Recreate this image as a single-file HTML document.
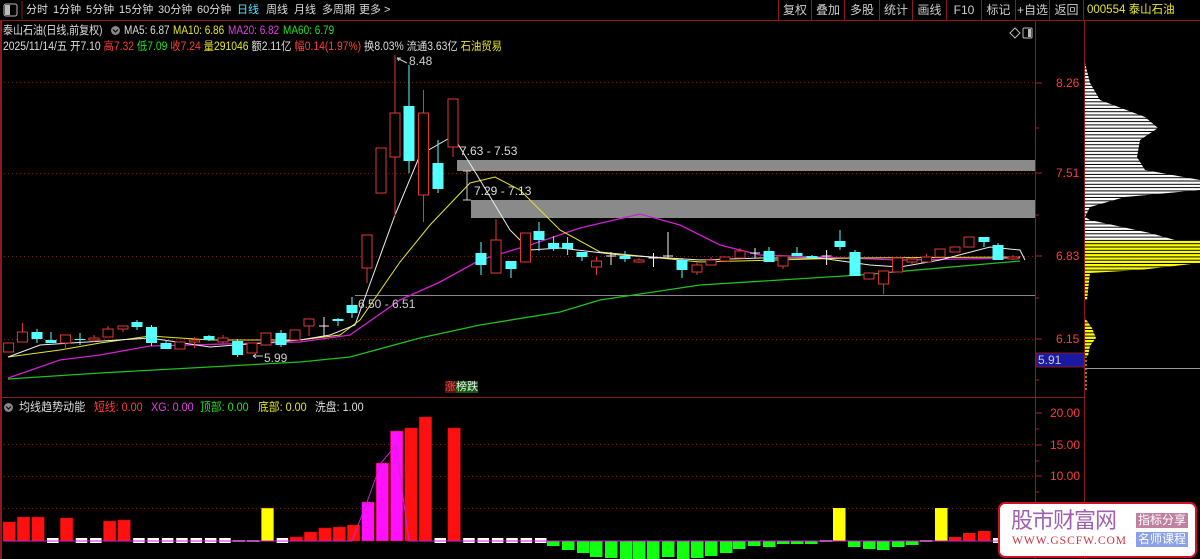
<!DOCTYPE html>
<html><head><meta charset="utf-8"><style>
*{margin:0;padding:0;box-sizing:border-box}
body{width:1200px;height:559px;background:#000;overflow:hidden;position:relative;font-family:"Liberation Sans","Noto Sans CJK SC",sans-serif;font-size:12px;color:#ddd}
.a{position:absolute;white-space:nowrap;line-height:14px}
.m{top:3px;color:#ddd;font-size:11px}
.sx{transform-origin:0 0}
.btn{position:absolute;top:0;height:20px;line-height:20px;text-align:center;color:#ccc;font-size:12px;border-left:1px solid #8b1a1a}
.r{color:#ff3c3c}.g{color:#22e022}.y{color:#e6e62a}.p{color:#e040e0}.w{color:#ddd}
</style></head><body>
<svg width="1200" height="559" style="position:absolute;left:0;top:0">
<defs><pattern id="st" width="10" height="3.3" patternUnits="userSpaceOnUse"><rect y="2.3" width="10" height="1" fill="#000"/></pattern></defs>
<line x1="0" y1="20.5" x2="1200" y2="20.5" stroke="#8b1a1a"/>
<line x1="1" y1="20" x2="1" y2="559" stroke="#8b1a1a" stroke-width="2"/>
<line x1="1035.5" y1="20" x2="1035.5" y2="559" stroke="#8b1a1a"/>
<line x1="1084.5" y1="20" x2="1084.5" y2="559" stroke="#8b1a1a"/>
<line x1="0" y1="397.5" x2="1085" y2="397.5" stroke="#8b1a1a"/>
<line x1="22" y1="1" x2="22" y2="19" stroke="#8b1a1a"/>
<g stroke="#7a1a1a" stroke-dasharray="1,3">
<line x1="4" y1="82.5" x2="1035" y2="82.5"/><line x1="4" y1="173.5" x2="1035" y2="173.5"/>
<line x1="4" y1="256.5" x2="1035" y2="256.5"/><line x1="4" y1="339.5" x2="1035" y2="339.5"/>
<line x1="4" y1="444.5" x2="1035" y2="444.5"/><line x1="4" y1="476.5" x2="1035" y2="476.5"/>
<line x1="4" y1="508.5" x2="1035" y2="508.5"/>
</g>
<g stroke="#b02020">
<line x1="1036" y1="83" x2="1042" y2="83"/><line x1="1036" y1="173" x2="1042" y2="173"/><line x1="1036" y1="256" x2="1042" y2="256"/><line x1="1036" y1="339" x2="1042" y2="339"/>
<line x1="1036" y1="128" x2="1039" y2="128"/><line x1="1036" y1="215" x2="1039" y2="215"/><line x1="1036" y1="298" x2="1039" y2="298"/><line x1="1036" y1="380" x2="1039" y2="380"/>
<line x1="1036" y1="413" x2="1042" y2="413"/><line x1="1036" y1="445" x2="1042" y2="445"/><line x1="1036" y1="476" x2="1042" y2="476"/><line x1="1036" y1="508" x2="1042" y2="508"/>
<line x1="1036" y1="429" x2="1039" y2="429"/><line x1="1036" y1="461" x2="1039" y2="461"/><line x1="1036" y1="492" x2="1039" y2="492"/>
</g>
<rect x="457" y="160" width="578" height="11" fill="#8a8a8a"/>
<rect x="471" y="200" width="564" height="18" fill="#8a8a8a"/>
<line x1="355" y1="295.5" x2="1035" y2="295.5" stroke="#888"/>
<path d="M467 171V200M463 171H471M463 200H471" stroke="#ccc" fill="none"/>
<polyline fill="none" stroke="#20c020" stroke-width="1.3" points="8,379 100,373 300,362 350,357 420,338 480,325 560,312 600,300 700,285 860,275 1020,261"/>
<polyline fill="none" stroke="#d020d0" stroke-width="1.3" points="8,378 60,360 100,355 150,346 300,342 350,335 400,300 440,282 480,260 530,245 580,228 640,214 680,225 720,245 760,255 900,260 1020,258"/>
<polyline fill="none" stroke="#e6e62a" stroke-width="1" points="8,357 60,350 100,343 150,336 210,340 300,340 340,335 360,320 400,262 430,225 470,183 495,177 520,190 560,230 600,252 700,262 850,258 1020,257"/>
<polyline fill="none" stroke="#eee" stroke-width="1" points="8,357 40,345 150,338 210,347 300,340 330,335 355,325 395,215 420,155 453,136 480,180 510,230 530,250 560,248 620,255 700,260 760,258 820,258 870,265 900,267 940,260 990,247 1020,250 1025,260"/>
<g id="cand"></g>
<g id="bars"></g>
<polyline fill="none" stroke="#d020d0" stroke-width="1" points="4,541 352,541 367,502 381,463 396,445 409,541 1030,541"/>
<g>
<polygon fill="#fff" points="1085,63 1090,83 1100,100 1145,117 1158,128 1140,140 1137,157 1145,170 1200,180 1200,190 1125,197 1090,207 1085,217 1090,220 1150,233 1175,240 1085,240"/>
<polygon fill="#ffff00" points="1085,240 1200,240 1200,263 1140,270 1090,273 1087,300 1085,300"/>
<polygon fill="#ffff00" points="1085,318 1092,328 1096,338 1090,346 1088,356 1085,356"/>
<line x1="1086" y1="356" x2="1086" y2="390" stroke="#ffff00" stroke-dasharray="2,2"/>
<rect x="1085" y="60" width="115" height="300" fill="url(#st)"/>
<line x1="1085" y1="368.5" x2="1200" y2="368.5" stroke="#999"/>
</g>
<rect x="1036" y="353" width="48" height="14" fill="#1a1aa0" stroke="#8b1a1a"/>
<rect x="4" y="4" width="13" height="12" rx="2" fill="none" stroke="#bbb"/><rect x="5" y="5" width="5" height="10" fill="#bbb"/>
<path d="M1015 28l5 5-5 5-5-5z" fill="none" stroke="#bbb"/>
<rect x="1023" y="28" width="9" height="10" rx="1" fill="none" stroke="#bbb"/><rect x="1028" y="29" width="3" height="8" fill="#bbb"/>
<circle cx="115.5" cy="30.5" r="4.5" fill="#888"/><path d="M113 29.5l2.5 2.5 2.5-2.5" stroke="#000" fill="none"/>
<circle cx="8.5" cy="407.5" r="4.5" fill="#888"/><path d="M6 406.5l2.5 2.5 2.5-2.5" stroke="#000" fill="none"/>
<path d="M397 58l10 5M397 58l4 0M397 58l2 3" stroke="#ccc" fill="none"/>
<path d="M253 356h10M253 356l3-2M253 356l3 2" stroke="#ccc" fill="none"/>
</svg>

<div class="a m" style="left:26px">分时</div>
<div class="a m" style="left:53px">1分钟</div>
<div class="a m" style="left:86px">5分钟</div>
<div class="a m" style="left:119px">15分钟</div>
<div class="a m" style="left:158px">30分钟</div>
<div class="a m" style="left:197px">60分钟</div>
<div class="a m" style="left:237px;color:#55e5ff">日线</div>
<div class="a m" style="left:266px">周线</div>
<div class="a m" style="left:294px">月线</div>
<div class="a m" style="left:322px">多周期</div>
<div class="a m" style="left:359px">更多 &gt;</div>

<div class="btn" style="left:778px;width:33px">复权</div>
<div class="btn" style="left:811px;width:33px">叠加</div>
<div class="btn" style="left:844px;width:35px">多股</div>
<div class="btn" style="left:879px;width:33px">统计</div>
<div class="btn" style="left:912px;width:34px">画线</div>
<div class="btn" style="left:946px;width:35px">F10</div>
<div class="btn" style="left:981px;width:34px">标记</div>
<div class="btn" style="left:1015px;width:34px">+自选</div>
<div class="btn" style="left:1049px;width:35px;border-right:1px solid #8b1a1a">返回</div>
<div class="a" style="left:1087px;top:3px;color:#e6e62a;font-size:11.5px">000554 泰山石油</div>

<div class="a sx" style="left:3px;top:24px;font-size:11.5px;transform:scaleX(.87)">泰山石油(日线,前复权)</div>
<div class="a sx" style="left:124px;top:24px;font-size:11.5px;transform:scaleX(.87)">MA5: 6.87</div>
<div class="a sx y" style="left:173px;top:24px;font-size:11.5px;transform:scaleX(.87)">MA10: 6.86</div>
<div class="a sx p" style="left:228px;top:24px;font-size:11.5px;transform:scaleX(.87)">MA20: 6.82</div>
<div class="a sx g" style="left:283px;top:24px;font-size:11.5px;transform:scaleX(.87)">MA60: 6.79</div>
<div class="a sx" style="left:3px;top:40px;font-size:11.5px;transform:scaleX(.9)">2025/11/14/五 开7.10 <span class="r">高7.32</span> <span class="g">低7.09</span> <span class="r">收7.24</span> <span class="y">量291046</span> 额2.11亿 <span class="r">幅0.14(1.97%)</span> 换8.03% 流通3.63亿 <span class="y">石油贸易</span></div>

<div class="a" style="left:409px;top:54px;color:#ccc">8.48</div>
<div class="a" style="left:460px;top:144px;color:#ddd">7.63 - 7.53</div>
<div class="a" style="left:474px;top:184px;color:#ddd">7.29 - 7.13</div>
<div class="a" style="left:358px;top:297px;color:#ccc">6.50 - 6.51</div>
<div class="a" style="left:264px;top:351px;color:#ccc">5.99</div>

<div class="a r" style="left:1056px;top:76px">8.26</div>
<div class="a r" style="left:1056px;top:166px">7.51</div>
<div class="a r" style="left:1056px;top:249px">6.83</div>
<div class="a r" style="left:1056px;top:332px">6.15</div>
<div class="a" style="left:1038px;top:353px;color:#ccc">5.91</div>

<div class="a" style="left:445px;top:381px;font-size:11px;line-height:12px"><span style="background:#5a1010;color:#f44">涨</span><span style="background:#105a10;color:#eee">榜跌</span></div>

<div class="a sx" style="left:19px;top:400px;font-size:12px;transform:scaleX(.92)">均线趋势动能</div>
<div class="a sx r" style="left:94px;top:400px;font-size:12px;transform:scaleX(.9)">短线: 0.00</div>
<div class="a sx p" style="left:151px;top:400px;font-size:12px;transform:scaleX(.9)">XG: 0.00</div>
<div class="a sx g" style="left:200px;top:400px;font-size:12px;transform:scaleX(.9)">顶部: 0.00</div>
<div class="a sx y" style="left:258px;top:400px;font-size:12px;transform:scaleX(.9)">底部: 0.00</div>
<div class="a sx w" style="left:315px;top:400px;font-size:12px;transform:scaleX(.9)">洗盘: 1.00</div>

<div class="a r" style="left:1050px;top:406px">20.00</div>
<div class="a r" style="left:1050px;top:438px">15.00</div>
<div class="a r" style="left:1050px;top:469px">10.00</div>

<div style="position:absolute;left:998px;top:502px;width:199px;height:56px;background:#fff;border:2px solid #d01020;border-radius:7px"></div>
<div class="a" style="left:1011px;top:509px;font-size:22px;line-height:24px;color:#a060b0;letter-spacing:-1px">股市财富网</div>
<div class="a" style="left:1012px;top:535px;font-size:11.5px;line-height:12px;color:#d03040;font-family:'Liberation Serif',serif;letter-spacing:1px">WWW.GSCFW.COM</div>
<div class="a" style="left:1136px;top:513px;width:52px;height:15px;background:#c080a0;color:#fff;font-size:12px;line-height:15px;text-align:center">指标分享</div>
<div class="a" style="left:1136px;top:532px;width:52px;height:15px;background:#8aa0e8;color:#fff;font-size:12px;line-height:15px;text-align:center">名师课程</div>

<script>
var C=[[8.6,343,352,343,352,'r'],[22.4,332,342,323,342,'r'],[37,332,339,329,343,'c'],[51,340,343,332,343,'c'],[65.4,335,343,335,350,'r'],[80,339,340,333,345,'c'],[94,338,340,335,342,'r'],[108,329,337,326,337,'r'],[123,326,329,326,332,'r'],[137,322,327,320,330,'c'],[151.5,327,343,325,346,'c'],[166,343,349,340,349,'c'],[180,342,349,342,349,'r'],[194.6,340,342,337,348,'r'],[209,336,340,335,341,'c'],[223,338,342,335,344,'r'],[237.6,341,355,339,357,'c'],[252,343,353,343,353,'r'],[266,333,345,333,345,'r'],[281,333,345,330,347,'c'],[295,330,340,330,340,'r'],[309,319,326,319,336,'r'],[324,326,327,317,337,'w'],[338,319,321,318,326,'c'],[352,305,313,297,318,'c'],[367,235,268,235,283,'r'],[381,148,193,148,193,'r'],[395,113,157,55,217,'r'],[409,106,161,65,173,'c'],[423.5,113,195,90,222,'r'],[438,163,189,140,193,'c'],[453,99,147,99,157,'r'],
[481,253,265,242,275,'c'],[496,240,273,219,273,'r'],[511,261,269,261,278,'c'],[525.5,233,262,233,262,'r'],[539,231,240,222,251,'c'],[553.6,243,249,236,251,'c'],[567.6,243,249,237,255,'c'],[582,252,257,252,261,'c'],[596.5,261,267,257,275,'r'],[611,256,257,252,265,'w'],[625,256,259,251,262,'c'],[639,260,262,258,263,'r'],[653.5,258,259,253,267,'w'],[668,256,258,232,258,'w'],[682,260,270,258,278,'c'],[697,265,272,262,275,'r'],[711,260,265,257,265,'r'],[725,257,261,257,261,'r'],[740,251,258,248,258,'r'],[755,253,254,248,258,'w'],[769,251,262,247,262,'c'],[783,256,266,256,269,'r'],[797,253,256,247,256,'c'],[812,256,258,255,259,'c'],[826.6,256,257,250,265,'w'],[840,241,247,230,250,'c'],[855,252,276,250,276,'c'],[869,273,279,273,279,'r'],[883.6,271,284,271,294,'r'],[897.6,258,272,258,272,'r'],[912,259,262,257,264,'r'],[926.5,257,262,254,262,'r'],[940,249,257,249,257,'r'],[955,247,252,247,252,'r'],[969,237,247,237,247,'r'],[984,237,242,237,247,'c'],[998,245,260,243,260,'c'],[1013,257,259,255,260,'r']];
var s='';
C.forEach(function(c){var x=c[0],t=c[1],b=c[2],col=c[5]=='r'?'#e03838':c[5]=='c'?'#55ffff':'#eee';
s+='<line x1="'+x+'" y1="'+c[3]+'" x2="'+x+'" y2="'+c[4]+'" stroke="'+col+'"/>';
if(c[5]=='r')s+='<rect x="'+(x-5)+'" y="'+t+'" width="10" height="'+Math.max(b-t,1)+'" fill="#000" stroke="'+col+'"/>';
else if(c[5]=='c')s+='<rect x="'+(x-5.5)+'" y="'+t+'" width="11" height="'+Math.max(b-t,1)+'" fill="'+col+'"/>';
else s+='<line x1="'+(x-5)+'" y1="'+t+'" x2="'+(x+5)+'" y2="'+t+'" stroke="'+col+'"/>';});
document.getElementById('cand').innerHTML=s;
var B=[['r',522],['r',517],['r',517],['w'],['r',518],['w'],['w'],['r',521],['r',520],['w'],['w'],['w'],['w'],['w'],['w'],['w'],['n'],['n'],['y',508],['w'],['r',537],['r',532],['r',528],['r',527],['r',525],['m',502],['m',463],['m',431],['r',428],['r',417],['w'],['r',428],['w'],['w'],['w'],['w'],['w'],['w']];
var G=[[547,546],[562,550],[577,553],[590,557],[605,558],[620,559],[633,559],[647,559],[662,557],[677,559],[691,558],[705,556],[720,553],[733,549],[748,546],[763,547],[777,544],[791,544],[805,544],[820,0],[833,-1],[848,547],[863,549],[877,550],[892,547],[906,545],[920,0],[935,-1],[949,-537],[963,-533],[978,-531],[993,-2]];
var h='',base=541;
B.forEach(function(b,i){var l=3+14.35*i,w=12.5;
if(b[0]=='w')h+='<rect x="'+(l+1)+'" y="538" width="'+(w-1)+'" height="5" fill="#fff"/>';
else if(b[0]=='n')h+='<line x1="'+l+'" y1="541" x2="'+(l+w)+'" y2="541" stroke="#888" stroke-width="2"/>';
else{var c=b[0]=='r'?'#ff1010':b[0]=='y'?'#ffff00':'#ff10ff';h+='<rect x="'+l+'" y="'+b[1]+'" width="'+w+'" height="'+(base-b[1])+'" fill="'+c+'" stroke="#b00" stroke-width="0.5"/>';}});
G.forEach(function(g){var l=g[0],w=12.5,v=g[1];
if(v==0)h+='<line x1="'+l+'" y1="541" x2="'+(l+w)+'" y2="541" stroke="#888" stroke-width="2"/>';
else if(v==-1)h+='<rect x="'+l+'" y="508" width="'+w+'" height="33" fill="#ffff00"/>';
else if(v==-2)h+='<rect x="'+l+'" y="538" width="'+w+'" height="5" fill="#fff"/>';
else if(v<0)h+='<rect x="'+l+'" y="'+(-v)+'" width="'+w+'" height="'+(base+v)+'" fill="#ff1010"/>';
else h+='<rect x="'+l+'" y="'+base+'" width="'+w+'" height="'+(v-base)+'" fill="#11ff11"/>';});
document.getElementById('bars').innerHTML=h;
</script>
</body></html>
